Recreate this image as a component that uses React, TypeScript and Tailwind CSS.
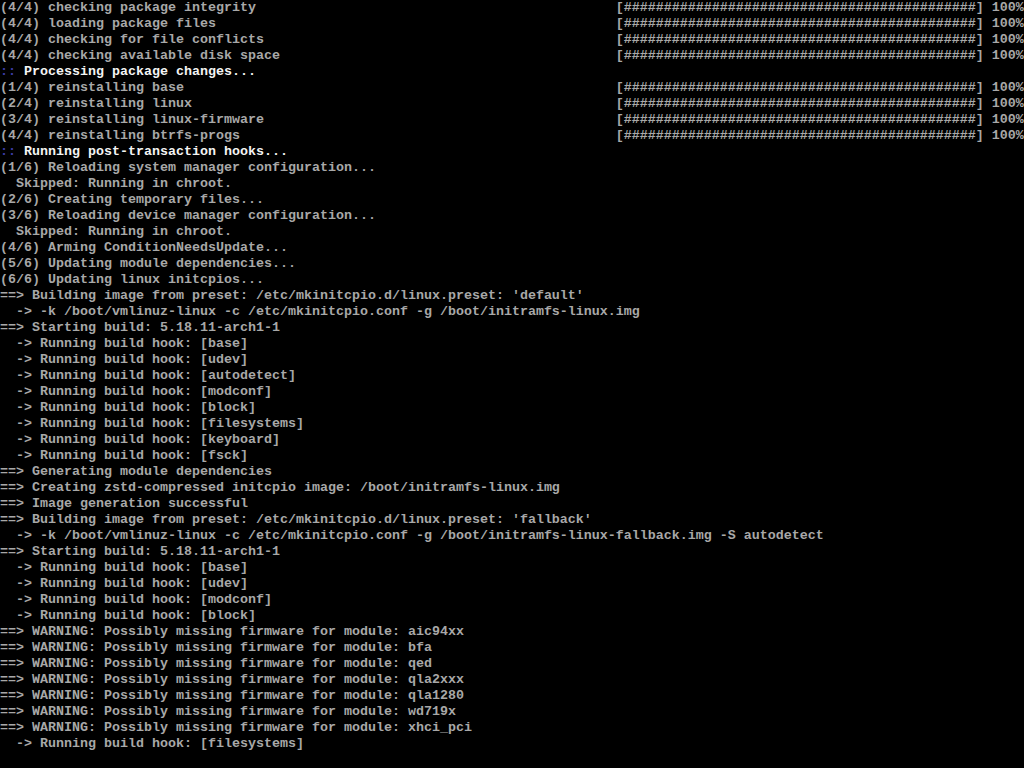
import React from "react";

type Seg = { t: string; c?: "g" | "w" | "b" };
type Line = Seg[];

const BAR = "[" + "#".repeat(44) + "] 100%";

function pad(s: string, n: number) {
  return s.length >= n ? s : s + " ".repeat(n - s.length);
}

const bar = (s: string): Line => [{ t: pad(s, 77) + BAR }];
const g = (s: string): Line => [{ t: s }];
const hdr = (s: string): Line => [
  { t: "::", c: "b" },
  { t: " " + s, c: "w" },
];

const hook = (h: string): Line => g("  -> Running build hook: [" + h + "]");
const warn = (m: string): Line =>
  g("==> WARNING: Possibly missing firmware for module: " + m);

const lines: Line[] = [
  bar("(4/4) checking package integrity"),
  bar("(4/4) loading package files"),
  bar("(4/4) checking for file conflicts"),
  bar("(4/4) checking available disk space"),
  hdr("Processing package changes..."),
  bar("(1/4) reinstalling base"),
  bar("(2/4) reinstalling linux"),
  bar("(3/4) reinstalling linux-firmware"),
  bar("(4/4) reinstalling btrfs-progs"),
  hdr("Running post-transaction hooks..."),
  g("(1/6) Reloading system manager configuration..."),
  g("  Skipped: Running in chroot."),
  g("(2/6) Creating temporary files..."),
  g("(3/6) Reloading device manager configuration..."),
  g("  Skipped: Running in chroot."),
  g("(4/6) Arming ConditionNeedsUpdate..."),
  g("(5/6) Updating module dependencies..."),
  g("(6/6) Updating linux initcpios..."),
  g("==> Building image from preset: /etc/mkinitcpio.d/linux.preset: 'default'"),
  g("  -> -k /boot/vmlinuz-linux -c /etc/mkinitcpio.conf -g /boot/initramfs-linux.img"),
  g("==> Starting build: 5.18.11-arch1-1"),
  hook("base"),
  hook("udev"),
  hook("autodetect"),
  hook("modconf"),
  hook("block"),
  hook("filesystems"),
  hook("keyboard"),
  hook("fsck"),
  g("==> Generating module dependencies"),
  g("==> Creating zstd-compressed initcpio image: /boot/initramfs-linux.img"),
  g("==> Image generation successful"),
  g("==> Building image from preset: /etc/mkinitcpio.d/linux.preset: 'fallback'"),
  g("  -> -k /boot/vmlinuz-linux -c /etc/mkinitcpio.conf -g /boot/initramfs-linux-fallback.img -S autodetect"),
  g("==> Starting build: 5.18.11-arch1-1"),
  hook("base"),
  hook("udev"),
  hook("modconf"),
  hook("block"),
  warn("aic94xx"),
  warn("bfa"),
  warn("qed"),
  warn("qla2xxx"),
  warn("qla1280"),
  warn("wd719x"),
  warn("xhci_pci"),
  hook("filesystems"),
];

export default function App() {
  return (
    <div className="w-[1024px] h-[768px] overflow-hidden bg-black">
      <div className="flex flex-col font-['Liberation_Mono',monospace] text-[13.333px] leading-[16px] font-bold text-[#a8a8a8] whitespace-pre">
        {lines.map((ln, i) => (
          <div key={i} className="h-[16px]">
            {ln.map((s, j) => (
              <span
                key={j}
                className={
                  s.c === "w"
                    ? "text-[#f4f4f4]"
                    : s.c === "b"
                    ? "text-[#3c3ca8]"
                    : ""
                }
              >
                {s.t}
              </span>
            ))}
          </div>
        ))}
      </div>
    </div>
  );
}
